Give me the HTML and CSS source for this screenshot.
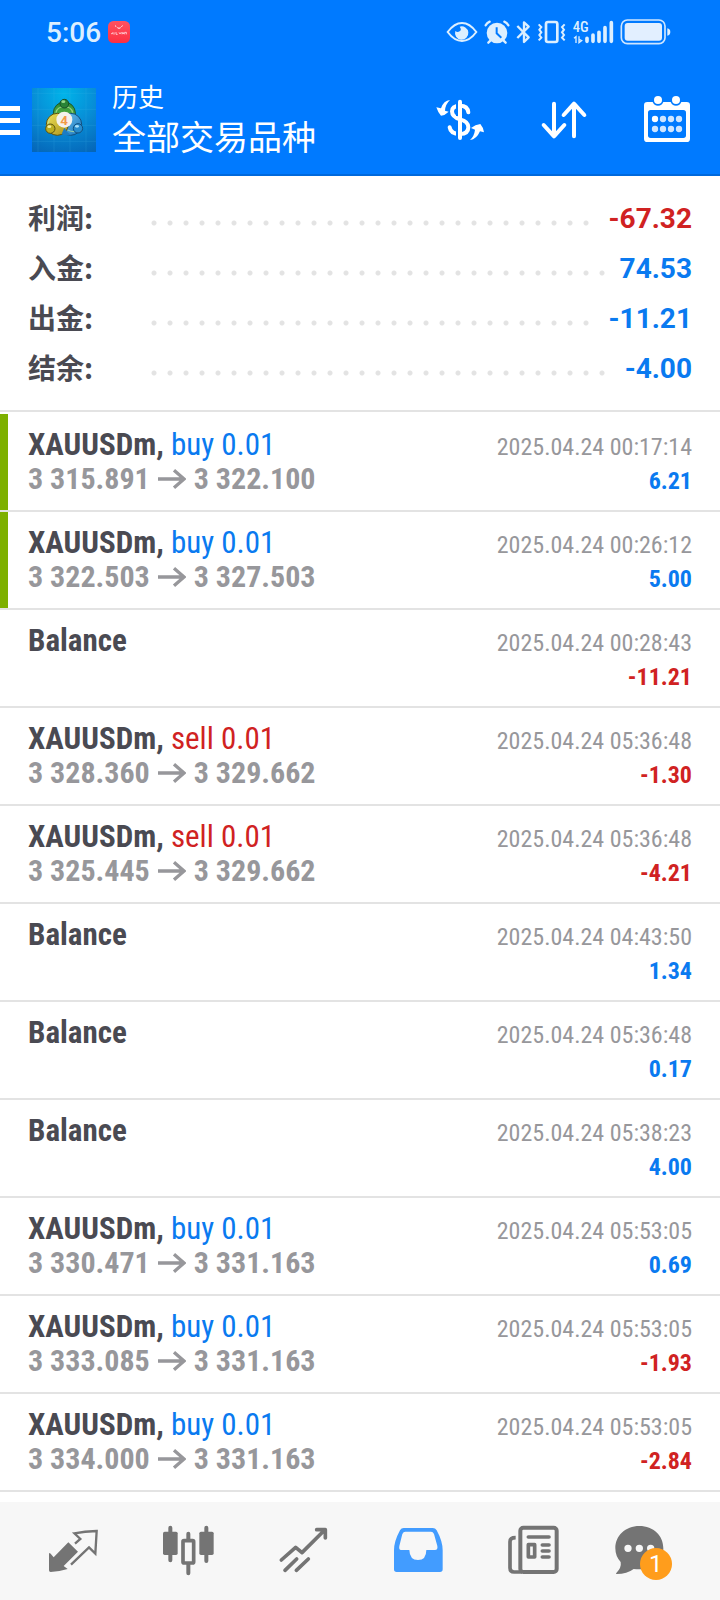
FILE: index.html
```html
<!DOCTYPE html>
<html lang="zh-CN">
<head>
<meta charset="utf-8">
<meta name="viewport" content="width=device-width, initial-scale=1">
<title>历史</title>
<link rel="stylesheet" href="styles.css">
</head>
<body>
<svg class="sprite" aria-hidden="true">
  <symbol id="arrow" viewBox="0 0 84 60"><path d="M0 30H78M48 4L78 30L48 56" fill="none" stroke="currentColor" stroke-width="10"/></symbol>
</svg>
<div class="app">
  <header class="header">
    <div class="status">
      <span class="time">5:06</span>
      <svg class="notice" viewBox="0 0 66 66" aria-hidden="true"><defs><linearGradient id="red" x2="0" y2="1"><stop stop-color="#ff5260"/><stop offset="1" stop-color="#fc2f42"/></linearGradient></defs><rect width="66" height="66" rx="16" fill="url(#red)"/><path d="M21 14l4 3M44 14l-4 3M28 20q5 4 10 0" stroke="#fff" stroke-width="3" fill="none"/><path d="M9 38h5v-4M18 34v7M24 33v7h5M33 34l3 5 3-5M42 40v-6l4 5v-5M50 40v-6h5v6" stroke="#fff" stroke-width="2" fill="none"/></svg>
      <div class="indicators">
        <svg width="32" height="28" viewBox="78 54 96 84" aria-hidden="true"><path d="M83 96Q103 69 126 69T169 96Q149 123 126 123T83 96Z" fill="none" stroke="#dcefff" stroke-width="6"/><path d="M119 80a20 20 0 1 1-13 13q6 6 13 1t0-14Z" fill="#dcefff"/></svg>
        <svg width="26" height="28" viewBox="192 54 78 84" aria-hidden="true"><circle cx="231" cy="99" r="31" fill="#dcefff"/><path d="M197 76q4-8 12-11M265 76q-4-8-12-11M212 121l-7 7M250 121l7 7" stroke="#dcefff" stroke-width="7" stroke-linecap="round" fill="none"/><path d="M230 82v18l14 13" stroke="#007aff" stroke-width="6" fill="none"/></svg>
        <svg width="15" height="28" viewBox="288 54 45 84" aria-hidden="true"><path d="M292 78L326 112L312 126V67L326 80L292 114" stroke="#dcefff" stroke-width="7" stroke-linejoin="round" fill="none"/></svg>
        <svg width="30" height="28" viewBox="351 54 90 84" aria-hidden="true"><rect x="378" y="66" width="34" height="60" rx="6" fill="none" stroke="#dcefff" stroke-width="8"/><path d="M356 73l8 8-6 8 6 8-6 8 6 8-8 8M434 73l-8 8 6 8-6 8 6 8-6 8 8 8" fill="none" stroke="#dcefff" stroke-width="6"/></svg>
        <svg width="41" height="28" viewBox="459 54 123 84" aria-hidden="true"><text class="network" x="458" y="96">4G</text><path d="M462 115l6-5v19M477 109v19l8-6-6-3" fill="none" stroke="#dcefff" stroke-width="4"/><path d="M501 115v9M519 105v19M537 97v27M555 83v41M574 68v56" stroke="#dcefff" stroke-width="11" stroke-linecap="round"/></svg>
        <svg width="51" height="28" viewBox="600 54 153 84" aria-hidden="true"><rect x="604" y="60" width="131" height="71" rx="18" fill="none" stroke="#cfe6ff" stroke-width="5"/><rect x="614" y="69" width="112" height="53" rx="9" fill="#e2efff"/><path d="M742 85q9 2 9 11t-9 11Z" fill="#dcefff"/></svg>
      </div>
    </div>
    <div class="toolbar">
      <button class="menu" aria-label="菜单"><span></span><span></span><span></span></button>
      <svg class="logo" viewBox="96 264 192 192" role="img" aria-label="MetaTrader 4">
        <defs>
          <radialGradient id="sky" cx=".5" cy=".1" r="1"><stop stop-color="#00b4ea"/><stop offset=".5" stop-color="#078dd6"/><stop offset="1" stop-color="#0566b8"/></radialGradient>
          <linearGradient id="green" x2="0" y2="1"><stop stop-color="#2b8c36"/><stop offset="1" stop-color="#6ac04b"/></linearGradient>
          <linearGradient id="yellow" x2="1" y2="1"><stop stop-color="#f0e25a"/><stop offset="1" stop-color="#a89017"/></linearGradient>
          <linearGradient id="blue" x2="1" y2="1"><stop stop-color="#74c8f2"/><stop offset="1" stop-color="#1673bd"/></linearGradient>
        </defs>
        <rect x="96" y="264" width="192" height="192" fill="url(#sky)"/>
        <path d="M162 264v192M210 264v192M258 264v192M114 264v192M96 328h192M96 376h192M96 424h192M96 280h192" stroke="#4cbcec" stroke-width="2" opacity=".25"/>
        <circle cx="193" cy="339" r="33" fill="url(#green)" stroke="#1b552c" stroke-width="3"/>
        <circle cx="212" cy="373" r="33" fill="url(#blue)" stroke="#124f7e" stroke-width="3"/>
        <circle cx="172" cy="373" r="33" fill="url(#yellow)" stroke="#5a5310" stroke-width="3"/>
        <path d="M193 383Q200 396 212 404Q196 408 185 402Z" fill="#1b7cc4"/>
        <path d="M168 338q4-18 25-18t25 18M149 358q-6 8-4 16M203 390q20 10 32 0" fill="none" stroke="#b9e69a" stroke-width="4" opacity=".7"/>
        <circle cx="193" cy="311" r="13" fill="#298336" stroke="#17502a" stroke-width="3"/><circle cx="151" cy="386" r="14" fill="#bcae22" stroke="#5a5310" stroke-width="3"/><circle cx="234" cy="385" r="14" fill="#278cce" stroke="#124f7e" stroke-width="3"/>
        <ellipse cx="190" cy="305" rx="6" ry="4" fill="#96d88c"/><ellipse cx="148" cy="380" rx="6" ry="4" fill="#f6f0a0"/><ellipse cx="231" cy="379" rx="6" ry="4" fill="#a9e0fa"/>
        <circle cx="193" cy="359" r="24" fill="#f4f1ec"/><text class="logo-number" x="192" y="374">4</text>
      </svg>
      <div class="titles"><p class="subtitle">历史</p><h1 class="title">全部交易品种</h1></div>
      <div class="actions">
        <button aria-label="货币"><svg viewBox="30 270 180 180"><path d="M145 337Q143 317 120 317Q96 317 96 334Q96 351 120 358Q145 364 145 382Q145 402 120 402Q92 402 89 382" fill="none" stroke="#fff" stroke-width="12" stroke-linecap="round"/><path d="M111 300v48M111 368v48" stroke="#007aff" stroke-width="6"/><path d="M120 305v109" stroke="#fff" stroke-width="12" stroke-linecap="round"/><path d="M90 300Q71 301 63 325L49 322Q54 338 63 347Q75 346 86 335L75 332Q76 313 90 300ZM150 420Q170 418 180 394L192 397Q190 382 181 372Q166 373 153 384L165 389Q163 408 150 420Z" fill="#fff"/></svg></button>
        <button aria-label="排序"><svg viewBox="342 270 180 180"><path d="M402 311v98M371 375l31 34 31-34M462 409v-98M431 345l31-34 31 34" fill="none" stroke="#fff" stroke-width="12" stroke-linecap="round" stroke-linejoin="round"/></svg></button>
        <button aria-label="日期"><svg viewBox="654 270 180 180"><path fill-rule="evenodd" d="M682 306H698Q702 317 714 317T730 306H752Q756 317 768 317T784 306H800Q810 306 810 316V416Q810 426 800 426H682Q672 426 672 416V316Q672 306 682 306ZM692 330Q684 330 684 338V406Q684 414 692 414H790Q798 414 798 406V338Q798 330 790 330Z" fill="#fff"/><circle cx="714" cy="300" r="12" fill="#fff"/><circle cx="768" cy="300" r="12" fill="#fff"/><path d="M705 357h0M705 387h0M729 357h0M729 387h0M753 357h0M753 387h0M777 357h0M777 387h0" stroke="#cfe5ff" stroke-width="19" stroke-linecap="round"/><circle cx="705" cy="357" r="9" fill="#fff"/></svg></button>
      </div>
    </div>
  </header>
  <main class="content">
    <dl class="summary">
      <div class="sum-row"><dt>利润:</dt><dd class="loss">-67.32</dd></div>
      <div class="sum-row"><dt>入金:</dt><dd class="gain">74.53</dd></div>
      <div class="sum-row"><dt>出金:</dt><dd class="gain">-11.21</dd></div>
      <div class="sum-row"><dt>结余:</dt><dd class="gain">-4.00</dd></div>
    </dl>
    <ul class="deals">
      <li class="deal marked"><div class="info"><p class="symbol">XAUUSDm, <span class="gain">buy 0.01</span></p><p class="prices">3 315.891<svg><use href="#arrow"/></svg>3 322.100</p></div><div class="result"><time>2025.04.24 00:17:14</time><span class="amount gain">6.21</span></div></li>
      <li class="deal marked"><div class="info"><p class="symbol">XAUUSDm, <span class="gain">buy 0.01</span></p><p class="prices">3 322.503<svg><use href="#arrow"/></svg>3 327.503</p></div><div class="result"><time>2025.04.24 00:26:12</time><span class="amount gain">5.00</span></div></li>
      <li class="deal"><div class="info"><p class="symbol">Balance</p></div><div class="result"><time>2025.04.24 00:28:43</time><span class="amount loss">-11.21</span></div></li>
      <li class="deal"><div class="info"><p class="symbol">XAUUSDm, <span class="loss">sell 0.01</span></p><p class="prices">3 328.360<svg><use href="#arrow"/></svg>3 329.662</p></div><div class="result"><time>2025.04.24 05:36:48</time><span class="amount loss">-1.30</span></div></li>
      <li class="deal"><div class="info"><p class="symbol">XAUUSDm, <span class="loss">sell 0.01</span></p><p class="prices">3 325.445<svg><use href="#arrow"/></svg>3 329.662</p></div><div class="result"><time>2025.04.24 05:36:48</time><span class="amount loss">-4.21</span></div></li>
      <li class="deal"><div class="info"><p class="symbol">Balance</p></div><div class="result"><time>2025.04.24 04:43:50</time><span class="amount gain">1.34</span></div></li>
      <li class="deal"><div class="info"><p class="symbol">Balance</p></div><div class="result"><time>2025.04.24 05:36:48</time><span class="amount gain">0.17</span></div></li>
      <li class="deal"><div class="info"><p class="symbol">Balance</p></div><div class="result"><time>2025.04.24 05:38:23</time><span class="amount gain">4.00</span></div></li>
      <li class="deal"><div class="info"><p class="symbol">XAUUSDm, <span class="gain">buy 0.01</span></p><p class="prices">3 330.471<svg><use href="#arrow"/></svg>3 331.163</p></div><div class="result"><time>2025.04.24 05:53:05</time><span class="amount gain">0.69</span></div></li>
      <li class="deal"><div class="info"><p class="symbol">XAUUSDm, <span class="gain">buy 0.01</span></p><p class="prices">3 333.085<svg><use href="#arrow"/></svg>3 331.163</p></div><div class="result"><time>2025.04.24 05:53:05</time><span class="amount loss">-1.93</span></div></li>
      <li class="deal"><div class="info"><p class="symbol">XAUUSDm, <span class="gain">buy 0.01</span></p><p class="prices">3 334.000<svg><use href="#arrow"/></svg>3 331.163</p></div><div class="result"><time>2025.04.24 05:53:05</time><span class="amount loss">-2.84</span></div></li>
    </ul>
  </main>
  <nav class="tabs">
    <button aria-label="行情"><svg viewBox="130 123 180 180"><path d="M206 187L235 215L192 258L204 267Q180 274 153 276Q148 276 148 271V221Q149 217 153 221L162 232Z" fill="#747474"/><path d="M226 191L242 177L224 160Q255 154 291 153L287 221L268 202L214 254" fill="none" stroke="#747474" stroke-width="7"/></svg></button>
    <button aria-label="图表"><svg viewBox="474 123 180 180"><path d="M511 143v98M565 161v20M565 250v30M619 143v100" stroke="#747474" stroke-width="12" stroke-linecap="round"/><rect x="489" y="155" width="44" height="70" rx="5" fill="#747474"/><rect x="598" y="155" width="43" height="70" rx="5" fill="#747474"/><rect x="549" y="182" width="32" height="67" rx="3" fill="#f7f7f7" stroke="#747474" stroke-width="11"/></svg></button>
    <button aria-label="交易"><svg viewBox="818 123 180 180"><path d="M843 240L886 202L905 218L973 150M949 149H975V174M889 237L854 271M924 237L888 271" fill="none" stroke="#747474" stroke-width="11" stroke-linecap="round" stroke-linejoin="round"/></svg></button>
    <button aria-label="历史" aria-current="page"><svg viewBox="82 123 180 180"><path fill-rule="evenodd" d="M132 144H219Q227 144 231 151Q249 184 249 211V268Q249 276 241 276H111Q103 276 103 268V211Q103 184 121 151Q125 144 132 144ZM137 155Q131 155 128 162L119 198Q117 210 124 210H149Q150 240 175 240T200 210H226Q235 210 233 198L223 162Q220 155 214 155Z" fill="#429cff"/></svg></button>
    <button aria-label="新闻"><svg viewBox="426 123 180 180"><rect x="481" y="143" width="109" height="133" rx="9" fill="none" stroke="#747474" stroke-width="12"/><path d="M467 173Q450 173 450 185V264Q450 276 462 276H486" fill="none" stroke="#747474" stroke-width="11"/><rect x="505" y="194" width="19" height="37" fill="none" stroke="#747474" stroke-width="11" stroke-linejoin="round"/><path d="M505 171h62M547 195h20M547 213h20M547 231h20" stroke="#747474" stroke-width="11" stroke-linecap="round"/></svg></button>
    <button aria-label="消息"><svg class="wide" viewBox="752 123 216 180"><path d="M837 138C880 138 909 167 909 205C909 250 872 273 820 267Q800 282 769 282Q765 282 768 279Q784 263 781 246Q765 229 765 205C765 167 795 138 837 138Z" fill="#747474"/><path d="M803 205h0M837 205h0M871 205h0" stroke="#f7f7f7" stroke-width="22" stroke-linecap="round"/></svg><span class="badge">1</span></button>
  </nav>
</div>
</body>
</html>
```
FILE: styles.css
```css
* { box-sizing: border-box; }
body, p, h1, dl, dd, ul { margin: 0; padding: 0; }
body {
  background: #fff;
  color: #4a4a52;
  font-family: Roboto, "Noto Sans CJK SC", sans-serif;
}
button { padding: 0; border: 0; background: none; }
svg { display: block; flex: none; }
.sprite { display: none; }
.app { display: flex; flex-direction: column; min-height: 100vh; }

.header { background: #007aff; color: #fff; border-bottom: 2px solid #0069dc; }
.status { display: flex; align-items: center; height: 64px; padding: 0 49px 0 46px; }
.time { font-size: 28px; font-weight: 500; color: #dcefff; }
.notice { width: 22px; height: 22px; margin-left: 7px; }
.indicators { display: flex; gap: 6px; margin-left: auto; }
.network { font: 500 44px "Roboto Condensed", Roboto, sans-serif; fill: #dcefff; }
.toolbar { display: flex; align-items: center; height: 110px; padding: 2px 22px 0 0; }
.menu { display: flex; flex-direction: column; gap: 7px; width: 20px; margin-right: 12px; }
.menu span { height: 5px; background: #fff; }
.logo { width: 64px; height: 64px; margin-right: 16px; }
.logo-number { font: bold 40px Roboto, sans-serif; fill: #f19a48; text-anchor: middle; }
.titles { flex: 1; }
.subtitle { font-size: 26px; line-height: 36px; }
.title { font-size: 34px; line-height: 44px; font-weight: 400; }
.actions { display: flex; gap: 44px; }
.actions svg, .tabs svg { width: 60px; height: 60px; }

.gain { color: #0a7af0; }
.loss { color: #d02222; }
.content { flex: 1; }
.summary { padding: 17px 28px; border-bottom: 2px solid #e3e3e3; }
.sum-row { display: flex; align-items: center; height: 50px; font-size: 28px; font-weight: 700; }
.sum-row dt { width: 118px; padding-bottom: 2px; font-family: "Noto Sans CJK SC", sans-serif; }
.sum-row dd { display: flex; flex: 1; align-items: center; gap: 12px; }
.sum-row dd::before {
  content: "";
  flex: 1;
  height: 16px;
  background: radial-gradient(circle at 8px 13px, #e3e3e3 2px, transparent 3px) 0 0 / 16px 16px;
}

.deals { list-style: none; padding-top: 2px; font-family: "Roboto Condensed", "Liberation Sans Narrow", Roboto, sans-serif; }
.deal {
  display: flex;
  justify-content: space-between;
  height: 98px;
  padding: 14px 28px 0;
  border-bottom: 2px solid #e3e3e3;
  line-height: 34px;
}
.marked { padding-left: 20px; }
.marked::before { content: ""; width: 8px; margin: -14px 0 0 -20px; background: #7db000; }
.marked .info { flex: 1; padding-left: 20px; }
.symbol, .prices { font-weight: 700; }
.symbol { font-size: 31px; }
.symbol span { font-weight: 400; }
.prices { display: flex; align-items: center; gap: 8px; font-size: 30px; color: #97979b; }
.prices svg { width: 28px; height: 20px; }
.result { display: flex; flex-direction: column; align-items: flex-end; padding-top: 2px; font-size: 24px; }
.result time { color: #97979b; }
.amount { font-weight: 700; }

.tabs { display: flex; height: 98px; padding: 0 16px; background: #f7f7f7; }
.tabs button { position: relative; flex: 1; display: flex; align-items: center; justify-content: center; }
.tabs .wide { width: 72px; }
.badge {
  position: absolute;
  top: 46px;
  left: calc(50% - 7px);
  width: 32px;
  height: 32px;
  border-radius: 50%;
  background: #ff9d1c;
  color: #fff;
  font: 24px/32px Roboto, sans-serif;
  text-align: center;
}
```
